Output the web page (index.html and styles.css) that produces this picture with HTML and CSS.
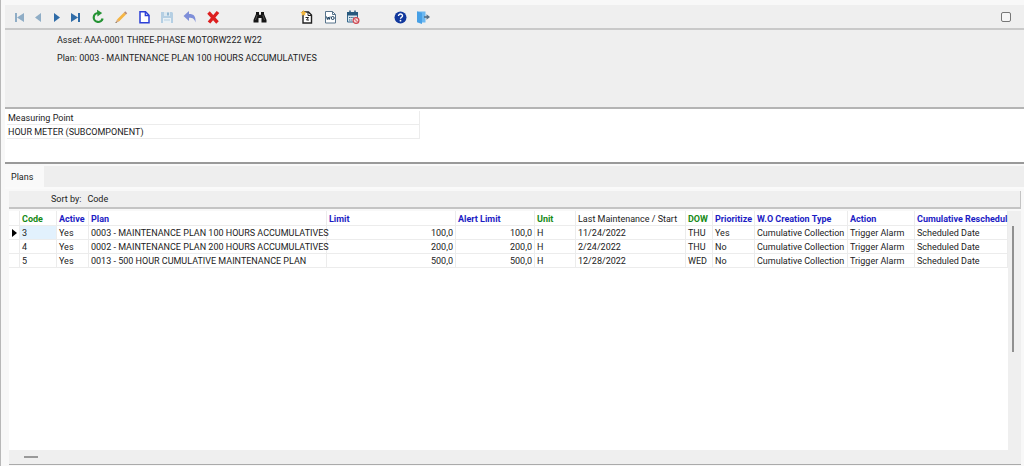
FILE: index.html
```html
<!DOCTYPE html>
<html lang="en">
<head>
    <meta charset="UTF-8">
    <meta name="viewport" content="width=device-width, initial-scale=1.0">
    <title>Cumulative Plans</title>
    <link rel="stylesheet" href="styles.css">
</head>
<body>
    <div class="window">
        <header class="toolbar">
            <div class="nav-group">
                <button type="button" aria-label="First"><svg width="16" height="16" viewBox="0 0 16 16" fill="#8fadc6"><path d="M4 4h2v9H4zM13 4v9L6 8.500z"/></svg></button>
                <button type="button" aria-label="Previous"><svg width="16" height="16" viewBox="0 0 16 16" fill="#8fadc6"><path d="M11 4v9L5 8.500z"/></svg></button>
                <button type="button" aria-label="Next"><svg width="16" height="16" viewBox="0 0 16 16" fill="#2f6ca8"><path d="M5 4v9l6-4.500z"/></svg></button>
                <button type="button" aria-label="Last"><svg width="16" height="16" viewBox="0 0 16 16" fill="#2f6ca8"><path d="M3 4v9l7-4.500zM10 4h2v9h-2z"/></svg></button>
            </div>
            <div class="group">
                <button type="button" aria-label="Refresh"><svg width="16" height="16" viewBox="0 0 16 16"><path d="M8 4a4.500 4.500 0 1 0 4.600 5.500" fill="none" stroke="#249333" stroke-width="2.200"/><path d="M7 0.800L12.200 4 7.500 7.500z" fill="#249333"/></svg></button>
                <button type="button" aria-label="Edit"><svg width="16" height="16" viewBox="0 0 16 16"><path d="M4 10.500L11 3.500l2 2L6 12.500z" fill="#f5b544"/><path d="M11 3.500L12.200 2.300l2 2L13 5.500z" fill="#b78a72"/><path d="M4 10.500L2.500 14 6 12.500z" fill="#d9a878"/><path d="M3 12.700L2.500 14l1.300-.5z" fill="#333"/></svg></button>
                <button type="button" aria-label="New"><svg width="16" height="16" viewBox="0 0 16 16"><path d="M4 2.800h5.500L13 6.300v7.400H4z" fill="#fff" stroke="#2b3fd6" stroke-width="1.500"/><path d="M9.300 3v3.500H13" fill="none" stroke="#2b3fd6" stroke-width="1.300"/></svg></button>
                <button type="button" aria-label="Save"><svg width="16" height="16" viewBox="0 0 16 16"><path d="M2 3h11l1 1v10H2z" fill="#b5cfe3"/><path d="M5 3h6v4H5z" fill="#dce8f0"/><path d="M8 3.500h2v3H8z" fill="#94b8d2"/><path d="M4 9h8v5H4z" fill="#e9f0f4"/><path d="M5 11h6" stroke="#b5cfe3"/></svg></button>
                <button type="button" aria-label="Undo"><svg width="16" height="16" viewBox="0 0 16 16"><path d="M7 2v3c5 0 7 2.500 6.500 8.500C12.500 10 11 8.800 7 8.800V12L1.500 7z" fill="#7f8fd9"/></svg></button>
                <button type="button" aria-label="Delete"><svg width="16" height="16" viewBox="0 0 16 16"><path d="M3.500 3.500l9 10M13 3L4 13.500" fill="none" stroke="#dd2020" stroke-width="3.400"/></svg></button>
            </div>
            <div class="group">
                <button type="button" aria-label="Find"><svg width="16" height="16" viewBox="0 0 16 16" fill="#151515"><path d="M4 3h3v2l.5 1h1L9 5V3h3v2l2.500 6v2.500H9.500V9h-3v4.500h-5V11L4 5z"/><path d="M5.200 6L3.500 11M10.800 6l1.700 5" stroke="#777" stroke-width=".6"/></svg></button>
            </div>
            <div class="group">
                <button type="button" aria-label="New numbered document"><svg width="16" height="16" viewBox="0 0 16 16"><path d="M4 3h5.500L12.500 6v8H4z" fill="#fff" stroke="#222" stroke-width="1.400"/><path d="M9 3v3.500h3.500" fill="none" stroke="#222"/><path d="M6.500 8.500h3L7.500 11h2.500" fill="none" stroke="#222"/><path d="M4.500 1l1 1.800 2 .4-1.400 1.500.3 2-1.900-.9-1.900.9.3-2L1.500 3.200l2-.4z" fill="#f2b63c"/></svg></button>
                <button type="button" aria-label="Work order"><svg width="16" height="16" viewBox="0 0 16 16"><path d="M3.500 2.500h7l3 3v8.500h-10z" fill="#fff" stroke="#58748c"/><path d="M10.500 2.500v3h3" fill="none" stroke="#58748c"/><path d="M4.500 7.500l.9 3 .9-2.400.9 2.400.9-3" fill="none" stroke="#173c5d"/><circle cx="10.700" cy="9" r="1.500" fill="none" stroke="#173c5d"/></svg></button>
                <button type="button" aria-label="Cancel schedule"><svg width="16" height="16" viewBox="0 0 16 16"><path d="M2.500 4h10v9h-10z" fill="#d9e7ef" stroke="#34678c"/><path d="M2 3h11v3.500H2z" fill="#28597e"/><path d="M5 1.500v3M10 1.500v3" stroke="#28597e" stroke-width="1.500"/><path d="M4 8.500h5M4 11h3" stroke="#34678c" stroke-dasharray="1.500 .7"/><circle cx="11" cy="11.500" r="2.900" fill="#f4dada" stroke="#cf4650" stroke-width="1.200"/><path d="M9 9.500l4 4" stroke="#cf4650"/></svg></button>
            </div>
            <div class="group">
                <button type="button" aria-label="Help"><svg width="16" height="16" viewBox="0 0 16 16"><circle cx="8.500" cy="8.500" r="6" fill="#11389d"/><path d="M6.500 7C6.500 4.300 10.700 4.500 10.500 7c-.1 1.300-2 1.300-2 2.800" fill="none" stroke="#fff" stroke-width="1.400"/><circle cx="8.500" cy="11.700" r=".9" fill="#fff"/></svg></button>
                <button type="button" aria-label="Exit"><svg width="16" height="16" viewBox="0 0 16 16"><path d="M2 2.500h8.500v11H7L2 12.500z" fill="#6bb8f2"/><path d="M2 2.500l5 1.200V15l-5-1.800z" fill="#47a0e6"/><path d="M9 8h4" stroke="#566f86" stroke-width="1.600"/><path d="M11.500 5.200L15 8l-3.500 2.800z" fill="#566f86"/></svg></button>
            </div>
            <input type="checkbox" class="toggle" aria-label="Select">
        </header>

        <section class="info">
            <p>Asset: AAA-0001 THREE-PHASE MOTORW222 W22</p>
            <p>Plan: 0003 - MAINTENANCE PLAN 100 HOURS ACCUMULATIVES</p>
        </section>

        <section class="points">
            <table>
                <thead>
                    <tr><th>Measuring Point</th></tr>
                </thead>
                <tbody>
                    <tr><td>HOUR METER (SUBCOMPONENT)</td></tr>
                </tbody>
            </table>
        </section>

        <nav class="tabs">
            <button type="button" class="tab">Plans</button>
        </nav>

        <main class="plans">
            <div class="sort-bar">
                <span>Sort by:</span>
                <span>Code</span>
            </div>
            <div class="grid">
                <div class="grid-body">
                    <table>
                        <colgroup>
                            <col class="c-mark"><col class="c-code"><col class="c-active"><col class="c-plan">
                            <col class="c-limit"><col class="c-alert"><col class="c-unit"><col class="c-last">
                            <col class="c-dow"><col class="c-prio"><col class="c-type"><col class="c-action"><col>
                        </colgroup>
                        <thead>
                            <tr>
                                <th></th>
                                <th class="green">Code</th>
                                <th class="blue">Active</th>
                                <th class="blue">Plan</th>
                                <th class="blue">Limit</th>
                                <th class="blue">Alert Limit</th>
                                <th class="green">Unit</th>
                                <th>Last Maintenance / Start</th>
                                <th class="green">DOW</th>
                                <th class="blue">Prioritize</th>
                                <th class="blue">W.O Creation Type</th>
                                <th class="blue">Action</th>
                                <th class="blue">Cumulative Reschedul</th>
                            </tr>
                        </thead>
                        <tbody>
                            <tr>
                                <td class="mark"><svg width="5" height="8" viewBox="0 0 5 8"><path d="M0 0l5 4-5 4z"/></svg></td>
                                <td class="selected">3</td><td>Yes</td><td>0003 - MAINTENANCE PLAN 100 HOURS ACCUMULATIVES</td>
                                <td class="num">100,0</td><td class="num">100,0</td><td>H</td><td>11/24/2022</td><td>THU</td><td>Yes</td>
                                <td>Cumulative Collection</td><td>Trigger Alarm</td><td>Scheduled Date</td>
                            </tr>
                            <tr>
                                <td></td>
                                <td>4</td><td>Yes</td><td>0002 - MAINTENANCE PLAN 200 HOURS ACCUMULATIVES</td>
                                <td class="num">200,0</td><td class="num">200,0</td><td>H</td><td>2/24/2022</td><td>THU</td><td>No</td>
                                <td>Cumulative Collection</td><td>Trigger Alarm</td><td>Scheduled Date</td>
                            </tr>
                            <tr>
                                <td></td>
                                <td>5</td><td>Yes</td><td>0013 - 500 HOUR CUMULATIVE MAINTENANCE PLAN</td>
                                <td class="num">500,0</td><td class="num">500,0</td><td>H</td><td>12/28/2022</td><td>WED</td><td>No</td>
                                <td>Cumulative Collection</td><td>Trigger Alarm</td><td>Scheduled Date</td>
                            </tr>
                        </tbody>
                    </table>
                </div>
                <div class="scroll-y"><div class="thumb"></div></div>
                <div class="scroll-x"><div class="thumb"></div></div>
            </div>
        </main>
    </div>
</body>
</html>
```
FILE: styles.css
```css
* {
    margin: 0;
    padding: 0;
    box-sizing: border-box;
}

body {
    font-family: Roboto, sans-serif;
    font-size: 9px;
    line-height: 12px;
    color: #222;
    background-color: #f8f8f8;
}

button {
    font: inherit;
    color: inherit;
    border: none;
    background: none;
}

.window {
    display: flex;
    flex-direction: column;
    min-height: 100vh;
    padding: 5px 0 1px 4px;
    border-left: 1px solid #b8b8b8;
}

.toolbar {
    display: flex;
    align-items: center;
    gap: 24px;
    height: 25px;
    padding: 0 13px 0 4px;
    background-color: #efefef;
    border-bottom: 2px solid #c9c9c9;
}

.toolbar button {
    display: flex;
    align-items: center;
    justify-content: center;
    height: 22px;
    width: 23px;
}

.nav-group,
.group {
    display: flex;
}

.nav-group {
    margin-right: -23px;
}

.toolbar .nav-group button {
    width: 19px;
}

.toggle {
    appearance: none;
    width: 10px;
    height: 10px;
    margin-left: auto;
    border: 1px solid #777;
    border-radius: 2px;
    background-color: #f6f6f6;
}

.info {
    display: flex;
    flex-direction: column;
    gap: 6px;
    height: 79px;
    padding: 4px 52px;
    background-color: #efefef;
    border-bottom: 2px solid #b4b4b4;
}

.points {
    height: 55px;
    padding: 2px;
    background-color: #fff;
    border-bottom: 2px solid #999;
}

table {
    border-collapse: separate;
    border-spacing: 0;
    table-layout: fixed;
}

th,
td {
    height: 14px;
    padding: 0 2px;
    font-weight: 400;
    text-align: left;
    white-space: nowrap;
    border-right: 1px solid #ececec;
    border-bottom: 1px solid #ececec;
}

.points table {
    width: 413px;
}

.points th,
.points td {
    padding: 0 1px;
}

.tabs {
    display: flex;
    height: 23px;
    margin-top: 2px;
    background-color: #eee;
    border-bottom: 2px solid #fafafa;
}

.tab {
    width: 39px;
    text-align: left;
    padding-left: 6px;
    background-color: #f9f9f9;
}

.plans {
    display: flex;
    flex-direction: column;
    flex: 1;
    padding: 2px 3px 0 4px;
}

.sort-bar {
    display: flex;
    align-items: center;
    gap: 6px;
    height: 18px;
    padding-left: 42px;
    background-color: #efefef;
    border-right: 1px solid #c4c4c4;
    border-bottom: 2px solid #c4c4c4;
}

.grid {
    display: grid;
    grid-template-columns: 1fr 13px;
    grid-template-rows: 1fr 14px;
    flex: 1;
    margin-top: 2px;
    background-color: #efefef;
    border-bottom: 1px solid #aaa;
}

.grid-body {
    min-width: 0;
    overflow: hidden;
    background-color: #fff;
}

.grid-body table {
    width: 100%;
}

.grid-body th {
    height: 15px;
    padding-top: 1px;
}

.grid-body .blue,
.grid-body .green {
    font-weight: 700;
}

.blue {
    color: #1c1cc4;
}

.green {
    color: #168a16;
}

.grid-body .selected {
    background-color: #e2f1fd;
}

.num {
    text-align: right;
}

.mark svg {
    display: block;
    margin-left: 1px;
}

.c-mark { width: 11px; }
.c-code { width: 37px; }
.c-active { width: 32px; }
.c-plan { width: 238px; }
.c-limit { width: 129px; }
.c-alert { width: 79px; }
.c-unit { width: 41px; }
.c-last { width: 110px; }
.c-dow { width: 27px; }
.c-prio { width: 42px; }
.c-type { width: 93px; }
.c-action { width: 67px; }

.scroll-y .thumb {
    width: 2px;
    height: 126px;
    margin: 15px 0 0 4px;
    background-color: #909090;
}

.scroll-x {
    grid-column: 1 / -1;
}

.scroll-x .thumb {
    width: 14px;
    height: 2px;
    margin: 6px 0 0 15px;
    background-color: #999;
}
```
